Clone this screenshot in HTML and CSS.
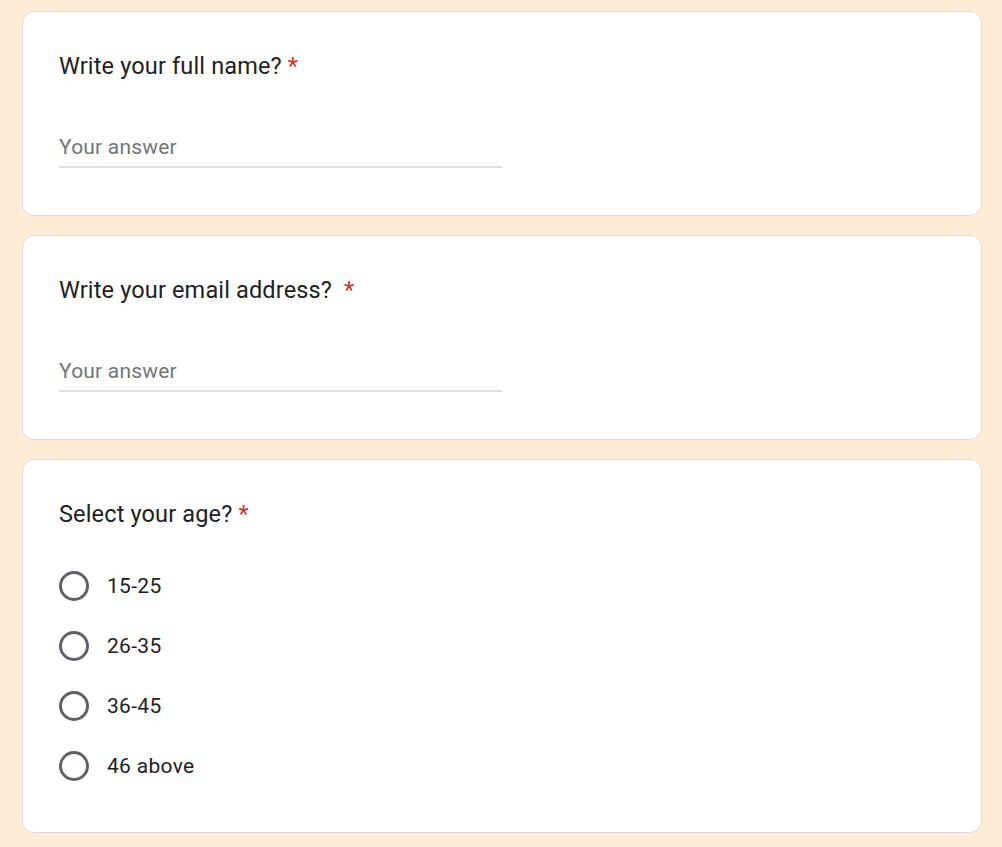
FILE: index.html
```html
<!DOCTYPE html>
<html lang="en">
<head>
<meta charset="utf-8">
<title>Form</title>
<link rel="stylesheet" href="styles.css">
</head>
<body>
<main class="form">
  <section class="card">
    <div class="q-title">Write your full name? <span class="req">*</span></div>
    <div class="answer"><input class="text-input" type="text" placeholder="Your answer"></div>
  </section>
  <section class="card">
    <div class="q-title">Write your email address?&nbsp; <span class="req">*</span></div>
    <div class="answer"><input class="text-input" type="text" placeholder="Your answer"></div>
  </section>
  <section class="card card-radio">
    <div class="q-title">Select your age? <span class="req">*</span></div>
    <div class="options">
      <label class="option"><span class="radio"></span><span class="opt-label">15-25</span></label>
      <label class="option"><span class="radio"></span><span class="opt-label">26-35</span></label>
      <label class="option"><span class="radio"></span><span class="opt-label">36-45</span></label>
      <label class="option"><span class="radio"></span><span class="opt-label">46 above</span></label>
    </div>
  </section>
</main>
</body>
</html>
```
FILE: styles.css
```css
* { box-sizing: border-box; }
html, body {
  margin: 0;
  padding: 0;
  background: #ffecd6;
  font-family: Roboto, "Liberation Sans", Arial, sans-serif;
}
.form {
  display: flex;
  flex-direction: column;
  gap: 19px;
  padding: 11px 0 0 22px;
}
.card {
  width: 960px;
  background: #ffffff;
  border: 1px solid #dadce0;
  border-radius: 12px;
  padding: 39px 36px 47px;
}
.card-radio { padding-bottom: 36px; }
.q-title {
  font-size: 23.5px;
  line-height: 30px;
  color: #202124;
  letter-spacing: 0.15px;
}
.req { color: #d93025; }
.answer { margin-top: 51px; width: 50%; }
.text-input {
  display: block;
  width: 100%;
  border: none;
  border-bottom: 2px solid #e0e0e0;
  padding: 0 0 4px;
  margin: 0;
  font: inherit;
  font-size: 21px;
  line-height: 30px;
  height: 36px;
  letter-spacing: 0.2px;
  color: #202124;
  background: transparent;
  outline: none;
}
.text-input::placeholder { color: #70757a; opacity: 1; }
.options { margin-top: 27px; display: flex; flex-direction: column; }
.option {
  display: flex;
  align-items: center;
  height: 60px;
  gap: 18px;
}
.radio {
  width: 30px;
  height: 30px;
  border: 3px solid #5f6368;
  border-radius: 50%;
  flex: none;
}
.opt-label {
  font-size: 21px;
  line-height: 30px;
  color: #202124;
  letter-spacing: 0.3px;
}
```
